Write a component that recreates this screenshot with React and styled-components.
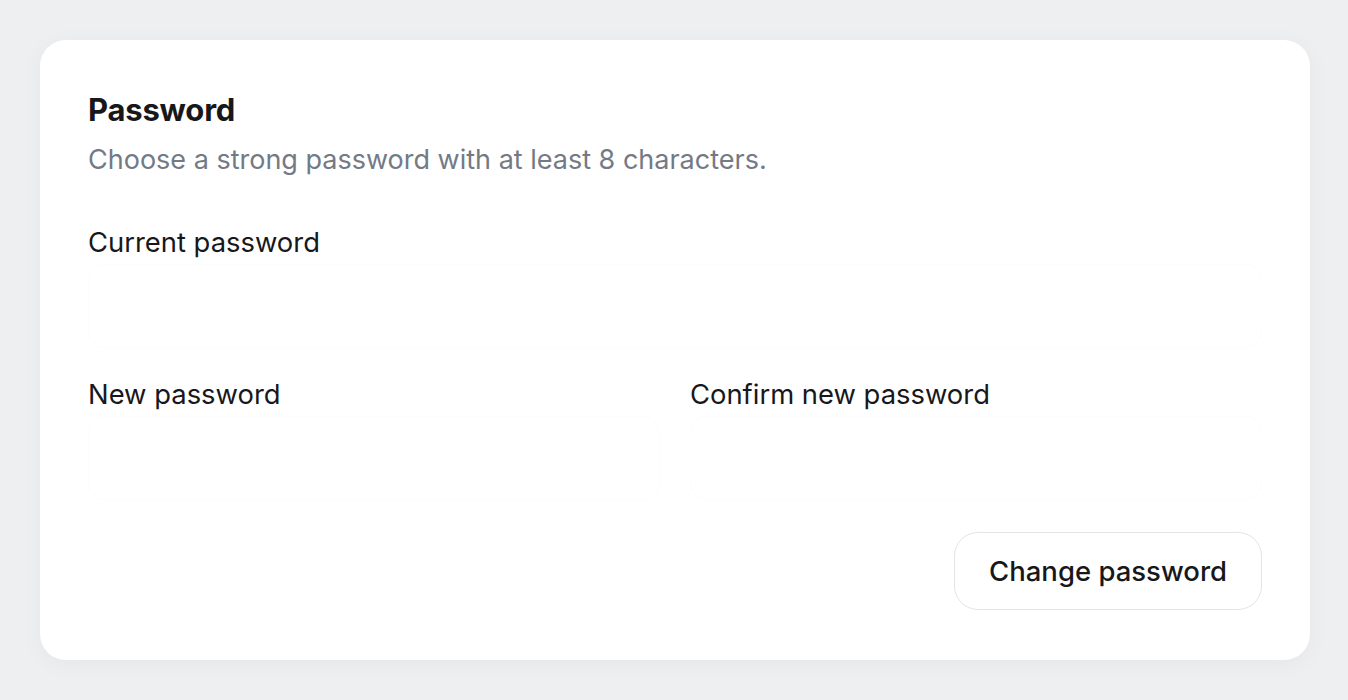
import React from "react"
import styled, { createGlobalStyle } from "styled-components"

const GlobalStyle = createGlobalStyle`
    html, body {
        margin: 0;
        padding: 0;
        background: #eeeff1;
        font-family: Inter, "Noto Sans", sans-serif;
        color: #18181b;
    }
`

const Page = styled.div`
    min-height: 700px;
    padding: 40px 38px 40px 40px;
    box-sizing: border-box;
`

const Card = styled.section`
    background: #ffffff;
    border-radius: 26px;
    box-shadow: 0 4px 24px rgba(15, 23, 42, 0.04);
    padding: 48px 48px 50px 48px;
    display: flex;
    flex-direction: column;
`

const Title = styled.h2`
    margin: 2px 0 0;
    font-size: 31px;
    line-height: 40px;
    font-weight: 650;
    letter-spacing: -0.2px;
`

const Subtitle = styled.p`
    margin: 12px 0 0;
    font-size: 27px;
    line-height: 36px;
    font-weight: 400;
    color: #747a85;
`

const Field = styled.div`
    display: flex;
    flex-direction: column;
    gap: 4px;
    margin-top: ${p => p.$top || 0}px;
`

const Label = styled.label`
    font-size: 27.4px;
    line-height: 36px;
    font-weight: 420;
    color: #18181b;
`

const Input = styled.input`
    height: 84px;
    box-sizing: border-box;
    border: 1px solid #fdfdfd;
    border-radius: 16px;
    background: #ffffff;
    font: inherit;
    font-size: 24px;
    padding: 0 24px;
    outline: none;
`

const Row = styled.div`
    display: grid;
    grid-template-columns: 1fr 1fr;
    gap: 30px;
    margin-top: 28px;
`

const Actions = styled.div`
    display: flex;
    justify-content: flex-end;
    margin-top: 32px;
`

const Button = styled.button`
    height: 78px;
    padding: 0 34px;
    border-radius: 24px;
    border: 1.5px solid #e4e4e7;
    background: #ffffff;
    font-family: inherit;
    font-size: 27.5px;
    font-weight: 500;
    color: #18181b;
    cursor: pointer;
`

export default function App() {
    return (
        <>
            <GlobalStyle />
            <Page>
                <Card>
                    <Title>Password</Title>
                    <Subtitle>Choose a strong password with at least 8 characters.</Subtitle>
                    <Field $top={46}>
                        <Label htmlFor="current">Current password</Label>
                        <Input id="current" type="password" />
                    </Field>
                    <Row>
                        <Field>
                            <Label htmlFor="new">New password</Label>
                            <Input id="new" type="password" />
                        </Field>
                        <Field>
                            <Label htmlFor="confirm">Confirm new password</Label>
                            <Input id="confirm" type="password" />
                        </Field>
                    </Row>
                    <Actions>
                        <Button type="button">Change password</Button>
                    </Actions>
                </Card>
            </Page>
        </>
    )
}
